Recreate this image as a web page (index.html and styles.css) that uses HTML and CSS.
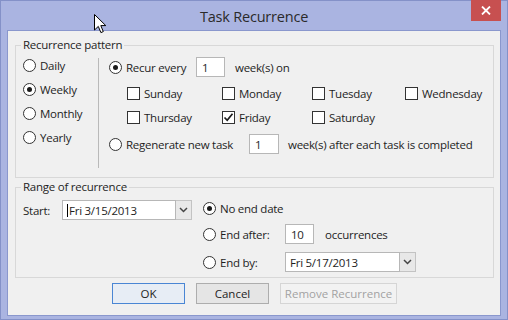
FILE: index.html
```html
<!DOCTYPE html>
<html>
<head>
<meta charset="utf-8">
<link rel="stylesheet" href="styles.css">
</head>
<body>
<div class="window">
  <div class="titlebar">
    <span></span>
    <span class="title">Task Recurrence</span>
    <button class="close" aria-label="Close">
      <svg width="10" height="9" viewBox="0 0 10 9"><path d="M1 0.5 L9 8.5 M9 0.5 L1 8.5" stroke="#fff" stroke-width="1.8"/></svg>
    </button>
  </div>
  <div class="content">
    <fieldset class="group pattern">
      <legend>Recurrence pattern</legend>
      <div class="pattern-body">
        <div class="freq">
          <label class="opt"><span class="radio"></span>Daily</label>
          <label class="opt"><span class="radio on"></span>Weekly</label>
          <label class="opt"><span class="radio"></span>Monthly</label>
          <label class="opt"><span class="radio"></span>Yearly</label>
        </div>
        <div class="sep"></div>
        <div class="weekly">
          <div class="row r1">
            <label class="opt w-recur"><span class="radio on"></span>Recur every</label>
            <span class="field num1">1</span>
            <span class="after1">week(s) on</span>
          </div>
          <div class="days">
            <label class="opt"><span class="check"></span>Sunday</label>
            <label class="opt"><span class="check"></span>Monday</label>
            <label class="opt"><span class="check"></span>Tuesday</label>
            <label class="opt"><span class="check"></span>Wednesday</label>
            <label class="opt"><span class="check"></span>Thursday</label>
            <label class="opt"><span class="check"><svg width="11" height="11" viewBox="0 0 11 11"><path d="M1.5 5.5 L4.2 8.3 L9.5 1.8" fill="none" stroke="#1a1a1a" stroke-width="1.7"/></svg></span>Friday</label>
            <label class="opt"><span class="check"></span>Saturday</label>
          </div>
          <div class="row r4">
            <label class="opt w-regen"><span class="radio"></span>Regenerate new task</label>
            <span class="field num2">1</span>
            <span class="after2">week(s) after each task is completed</span>
          </div>
        </div>
      </div>
    </fieldset>
    <fieldset class="group range">
      <legend>Range of recurrence</legend>
      <div class="range-body">
        <div class="start">
          <span class="start-label">Start:</span>
          <div class="combo c-start">
            <span class="combo-text"><span class="caret"></span>Fri 3/15/2013</span>
            <span class="combo-btn"><svg width="9" height="6" viewBox="0 0 9 6"><path d="M1 1 L4.5 4.5 L8 1" fill="none" stroke="#444" stroke-width="1.5"/></svg></span>
          </div>
        </div>
        <div class="ends">
          <div class="erow">
            <label class="opt"><span class="radio on"></span>No end date</label>
          </div>
          <div class="erow e2">
            <label class="opt w-end"><span class="radio"></span>End after:</label>
            <span class="field num3">10</span>
            <span class="after3">occurrences</span>
          </div>
          <div class="erow e3">
            <label class="opt w-end"><span class="radio"></span>End by:</label>
            <div class="combo c-end">
              <span class="combo-text">Fri 5/17/2013</span>
              <span class="combo-btn"><svg width="9" height="6" viewBox="0 0 9 6"><path d="M1 1 L4.5 4.5 L8 1" fill="none" stroke="#444" stroke-width="1.5"/></svg></span>
            </div>
          </div>
        </div>
      </div>
    </fieldset>
    <div class="buttons">
      <button class="btn default">OK</button>
      <button class="btn">Cancel</button>
      <button class="btn disabled">Remove Recurrence</button>
    </div>
  </div>
  <svg class="cursor" width="13" height="20" viewBox="0 0 13 20"><path d="M0.5 0.5 L0.5 16 L4.3 12.4 L6.9 18.6 L9.3 17.6 L6.8 11.6 L11.8 11.6 Z" fill="#fff" stroke="#000" stroke-width="1" stroke-linejoin="round"/></svg>
</div>
</body>
</html>
```

FILE: styles.css
```css
html, body {
  margin: 0;
  padding: 0;
}
body {
  font-family: "Open Sans", "Noto Sans", sans-serif;
  font-size: 11.5px;
  letter-spacing: -0.25px;
  color: #1e1e1e;
}
.window {
  position: relative;
  width: 508px;
  height: 320px;
  box-sizing: border-box;
  border: 1px solid #8491c8;
  background: #aab4e1;
  padding: 0 6px 3px 6px;
  display: flex;
  flex-direction: column;
}
.titlebar {
  height: 29px;
  display: grid;
  grid-template-columns: 1fr auto 1fr;
  align-items: center;
}
.title {
  font-size: 14.5px;
  letter-spacing: -0.2px;
  color: #2a2a2a;
  margin-top: 1px;
}
.close {
  justify-self: end;
  align-self: start;
  width: 30px;
  height: 21px;
  margin-top: -1px;
  padding: 0;
  border: 0;
  background: #c75050;
  display: flex;
  align-items: center;
  justify-content: center;
}
.content {
  flex: 1;
  background: #f0f0f0;
  border: 1px solid #8a97cd;
  padding: 0 6px 0 7px;
  display: flex;
  flex-direction: column;
}
.group {
  margin: 0;
  padding: 0;
  border: 1px solid #d8d8d8;
  min-width: 0;
  box-sizing: border-box;
}
.group legend {
  padding: 0 2px;
  margin-left: 5px;
  line-height: 16px;
}
.pattern {
  margin-top: 6px;
  height: 141px;
}
.range {
  margin-top: 1px;
  height: 99px;
}
.opt {
  display: flex;
  align-items: center;
  gap: 4px;
  white-space: nowrap;
}
.radio {
  width: 13px;
  height: 13px;
  box-sizing: border-box;
  border: 1px solid #333;
  border-radius: 50%;
  background: #fff;
  display: flex;
  align-items: center;
  justify-content: center;
  flex: none;
}
.radio.on::after {
  content: "";
  width: 5px;
  height: 5px;
  border-radius: 50%;
  background: #1a1a1a;
}
.check {
  width: 13px;
  height: 13px;
  box-sizing: border-box;
  border: 1px solid #333;
  background: #fff;
  display: flex;
  align-items: center;
  justify-content: center;
  flex: none;
}
.pattern-body {
  display: flex;
  align-items: flex-start;
}
.freq {
  width: 75px;
  padding: 0 0 0 7px;
  display: flex;
  flex-direction: column;
}
.freq .opt {
  height: 24px;
}
.sep {
  width: 1px;
  height: 110px;
  margin-top: 5px;
  background: #b9b9b9;
}
.weekly {
  padding: 4px 0 0 10px;
  display: flex;
  flex-direction: column;
}
.row {
  display: flex;
  align-items: center;
  height: 20px;
}
.field {
  height: 20px;
  box-sizing: border-box;
  border: 1px solid #b7b7b7;
  background: #fff;
  padding: 0 5px;
  display: flex;
  align-items: center;
}
.w-recur {
  width: 87px;
}
.num1 {
  width: 29px;
}
.after1 {
  margin-left: 10px;
}
.days {
  margin: 7px 0 0 18px;
  display: grid;
  grid-template-columns: 95px 90px 93px auto;
  grid-auto-rows: 20px;
  row-gap: 4px;
}
.days .opt {
  margin-top: -1px;
}
.r4 {
  margin-top: 6px;
}
.w-regen {
  width: 140px;
}
.num2 {
  width: 30px;
}
.after2 {
  margin-left: 9px;
}
.range-body {
  display: flex;
  align-items: flex-start;
  padding-left: 7px;
}
.start {
  display: flex;
  align-items: center;
  margin-top: 5px;
}
.start-label {
  width: 39px;
}
.combo {
  display: flex;
  height: 20px;
}
.combo-text {
  flex: 1;
  box-sizing: border-box;
  border: 1px solid #b7b7b7;
  background: #fff;
  padding: 0 4px;
  display: flex;
  align-items: center;
}
.caret {
  width: 1px;
  height: 13px;
  background: #000;
  margin-right: 1px;
}
.combo-btn {
  width: 16px;
  box-sizing: border-box;
  border: 1px solid #c3c3c3;
  border-left: 0;
  background: #e8e8e8;
  display: flex;
  align-items: center;
  justify-content: center;
}
.c-start {
  width: 130px;
}
.c-end {
  width: 131px;
}
.ends {
  margin-left: 11px;
  padding-top: 3px;
  display: flex;
  flex-direction: column;
}
.erow {
  display: flex;
  align-items: center;
  height: 20px;
}
.e2 {
  margin-top: 6px;
}
.e3 {
  margin-top: 8px;
}
.w-end {
  width: 82px;
}
.num3 {
  width: 29px;
}
.after3 {
  margin-left: 11px;
}
.buttons {
  display: flex;
  gap: 11px;
  margin-top: 5px;
  padding-left: 97px;
}
.btn {
  height: 21px;
  width: 73px;
  box-sizing: border-box;
  border: 1px solid #adadad;
  background: #e5e5e5;
  font: inherit;
  color: #1e1e1e;
  padding: 0;
}
.btn.default {
  border-color: #4a86d4;
  background: #e7edf5;
}
.btn.disabled {
  width: 117px;
  border-color: #d5d5d5;
  background: #f2f2f2;
  color: #a2a2a2;
}
.cursor {
  position: absolute;
  left: 93px;
  top: 13px;
}
```
